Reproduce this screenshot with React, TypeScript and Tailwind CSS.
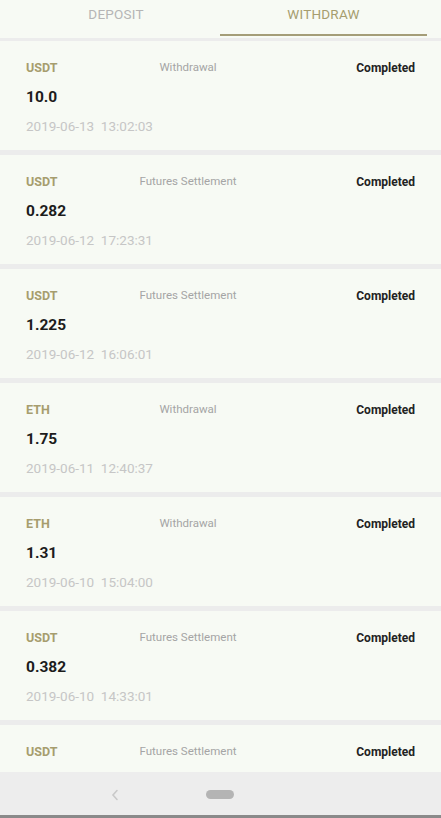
import React from "react";

const rows = [
  { coin: "USDT", type: "Withdrawal", amount: "10.0", date: "2019-06-13  13:02:03" },
  { coin: "USDT", type: "Futures Settlement", amount: "0.282", date: "2019-06-12  17:23:31" },
  { coin: "USDT", type: "Futures Settlement", amount: "1.225", date: "2019-06-12  16:06:01" },
  { coin: "ETH", type: "Withdrawal", amount: "1.75", date: "2019-06-11  12:40:37" },
  { coin: "ETH", type: "Withdrawal", amount: "1.31", date: "2019-06-10  15:04:00" },
  { coin: "USDT", type: "Futures Settlement", amount: "0.382", date: "2019-06-10  14:33:01" },
  { coin: "USDT", type: "Futures Settlement", amount: "", date: "" },
];

export default function App() {
  return (
    <div
      className="w-[441px] h-[818px] overflow-hidden bg-[#ececec] flex flex-col"
      style={{ fontFamily: "Roboto, 'Noto Sans', sans-serif" }}
    >
      {/* Tabs */}
      <div className="h-[38px] shrink-0 bg-[#f7faf4] flex relative">
        <div className="w-[220px] flex items-start justify-center pl-[12px] pt-[4px] text-[13.5px] text-[#b5b5b5] tracking-[0.2px]">
          DEPOSIT
        </div>
        <div className="w-[221px] flex flex-col items-start">
          <div className="w-[207px] flex justify-center pt-[4px] text-[13.5px] text-[#a69d6e] tracking-[0.2px]">
            WITHDRAW
          </div>
          <div className="mt-auto mb-[2px] w-[207px] h-[2px] bg-[#a49d78]" />
        </div>
      </div>
      <div className="h-[3px] shrink-0 bg-[#ececec]" />

      <div className="flex-1 overflow-hidden flex flex-col gap-[5px]">
        {rows.map((r, i) => (
          <div key={i} className="shrink-0 h-[109px] bg-[#f7faf4] px-[26px] pt-[19px]">
            <div className="flex items-center h-[16px]">
              <div className="w-[100px] text-[12.5px] font-bold text-[#a69d6e]">{r.coin}</div>
              <div className="w-[124px] text-center text-[11.5px] text-[#a5a5a5] whitespace-nowrap">
                {r.type}
              </div>
              <div className="flex-1 text-right text-[12px] font-bold text-[#222]">Completed</div>
            </div>
            <div className="mt-[13px] h-[17px] flex items-center text-[15.5px] font-bold text-[#1c1c1c]">
              {r.amount}
            </div>
            <div className="mt-[12px] h-[17px] flex items-center text-[13.5px] text-[#c6c6c6] whitespace-pre">
              {r.date}
            </div>
          </div>
        ))}
      </div>

      {/* Nav bar */}
      <div className="h-[43px] shrink-0 bg-[#ededed] relative flex items-center">
        <svg className="absolute left-[110px] top-[17px]" width="10" height="12" viewBox="0 0 10 12">
          <path d="M7 1.5 L3 6 L7 10.5" fill="none" stroke="#c9c9c9" strokeWidth="1.6" strokeLinecap="round" />
        </svg>
        <div className="absolute left-[206px] top-[18px] w-[28px] h-[9px] rounded-full bg-[#b4b4b4]" />
      </div>
      <div className="h-[3px] shrink-0 bg-[#8a8a8a]" />
    </div>
  );
}
